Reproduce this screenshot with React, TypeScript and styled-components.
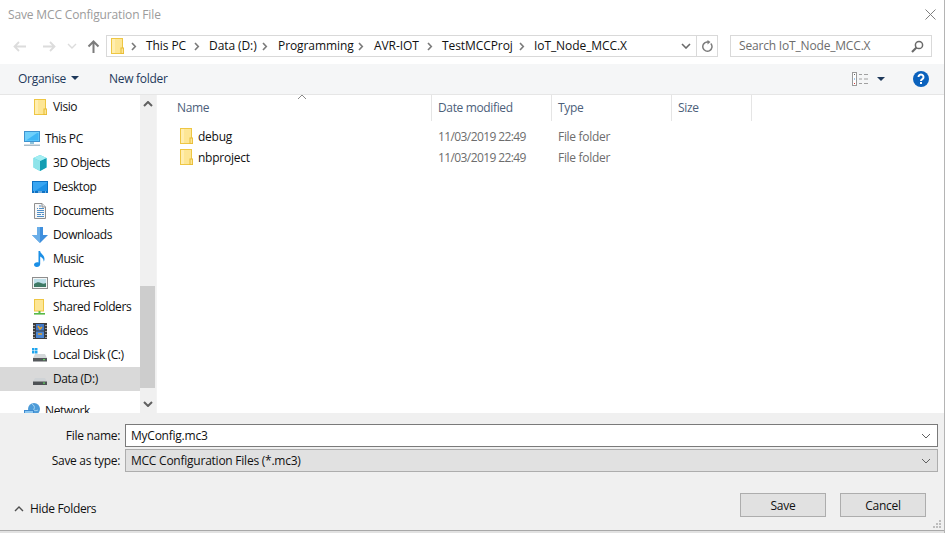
import React from "react";
import styled, { createGlobalStyle } from "styled-components";

const Global = createGlobalStyle`
  html, body { margin: 0; padding: 0; background: #fff; }
  * { box-sizing: border-box; }
`;

const Win = styled.div`
  width: 945px; height: 533px; overflow: hidden; background: #e2e2e2;
  display: flex; flex-direction: column; padding-bottom: 2px;
  font-family: "Open Sans", "Liberation Sans", sans-serif; font-size: 12px; letter-spacing: -0.24px; color: #111;
  border-right: 1px solid #b4b4b4;
`;
const TitleBar = styled.div`
  height: 28px; flex: none; display: flex; align-items: center; justify-content: space-between;
  padding: 0 8px 0 8px; color: #9b9b9b; background: #fff; letter-spacing: -0.15px;
`;
const AddrRow = styled.div`
  height: 36px; flex: none; display: flex; align-items: flex-start; padding: 7px 12px 0 12px; background: #fff;
`;
const Nav = styled.div`
  width: 94px; height: 22px; flex: none; display: flex; align-items: center;
`;
const NavSlot = styled.div<{ $w: number; $ml: number }>`
  width: ${p => p.$w}px; margin-left: ${p => p.$ml}px; flex: none; display: flex; justify-content: center; align-items: center;
`;
const AddrBox = styled.div`
  width: 612px; height: 22px; flex: none; display: flex; align-items: center;
  border: 1px solid #d9d9d9; padding-left: 4px;
`;
const Crumbs = styled.div`
  flex: 1; display: flex; align-items: center; min-width: 0; letter-spacing: -0.08px;
`;
const Crumb = styled.span<{ $w: number }>`
  width: ${p => p.$w}px; flex: none; white-space: nowrap; color: #111; margin-top: -2px;
`;
const Chev = styled.span<{ $w: number; $pl?: number }>`
  width: ${p => p.$w}px; flex: none; display: flex; align-items: center; padding-left: ${p => p.$pl ?? 4}px;
`;
const AddrEnd = styled.div<{ $sep?: boolean }>`
  width: 21px; height: 20px; flex: none; display: flex; align-items: center; justify-content: center;
  ${p => p.$sep ? "border-left: 1px solid #d9d9d9;" : ""}
`;
const SearchBox = styled.div`
  width: 202px; height: 22px; margin-left: 12px; flex: none; display: flex; align-items: center; justify-content: space-between;
  border: 1px solid #d9d9d9; padding: 0 7px 0 8px; color: #6d6d6d; letter-spacing: -0.18px;
`;
const SearchText = styled.span`margin-top: -2px;`;
const Toolbar = styled.div`
  height: 31px; flex: none; display: flex; align-items: center; background: #f5f6f7;
  border-bottom: 1px solid #e6e6e6; padding: 0 15px 0 18px; color: #1e395b;
`;
const ToolBtn = styled.span<{ $w: number }>`
  width: ${p => p.$w}px; flex: none; display: flex; align-items: center; gap: 5px; white-space: nowrap; margin-top: -2px;
  letter-spacing: -0.28px;
`;
const ToolSpacer = styled.div`flex: 1;`;
const ViewBtn = styled.div`
  display: flex; align-items: center; gap: 9px; margin-right: 28px;
`;
const Main = styled.div`
  flex: 1; display: flex; min-height: 0; background: #fff;
`;
const Tree = styled.div`
  width: 140px; flex: none; overflow: hidden; letter-spacing: -0.4px;
`;
const TreeRow = styled.div<{ $top?: boolean; $sel?: boolean; $gap?: boolean }>`
  height: 24px; display: flex; align-items: center; gap: 5px; white-space: nowrap;
  padding-left: ${p => p.$top ? 24 : 32}px;
  margin-top: ${p => p.$gap ? 8 : 0}px;
  background: ${p => p.$sel ? "#d9d9d9" : "transparent"};
  color: #111;
`;
const TreeIcon = styled.span`
  width: 16px; height: 16px; flex: none; display: flex; align-items: center; justify-content: center;
`;
const TreeText = styled.span`margin-top: -2px;`;
const Scrollbar = styled.div`
  width: 16px; flex: none; background: #f0f0f0; display: flex; flex-direction: column;
`;
const ScrollBtn = styled.div`
  height: 18px; flex: none; display: flex; align-items: center; justify-content: center;
`;
const ScrollTrack = styled.div`flex: 1; display: flex; flex-direction: column; padding-top: 173px;`;
const ScrollThumb = styled.div`height: 102px; width: 15px; background: #cdcdcd;`;
const ListPane = styled.div`
  flex: 1; min-width: 0; border-left: 1px solid #f3f3f3;
`;
const Header = styled.div`
  display: grid; grid-template-columns: 275px 120px 120px 80px; height: 26px; color: #4c607a; position: relative;
  letter-spacing: -0.36px;
`;
const HeadCell = styled.div<{ $first?: boolean }>`
  padding-left: ${p => p.$first ? 20 : 6}px; padding-bottom: 2px; display: flex; align-items: center;
  border-right: 1px solid #e5e5e5;
`;
const SortMark = styled.span`
  position: absolute; left: 140px; top: -1px; line-height: 0;
`;
const Rows = styled.div`padding-top: 5px;`;
const FileRow = styled.div`
  display: grid; grid-template-columns: 275px 120px 120px; height: 20px; margin-bottom: 1px; align-items: center;
`;
const NameCell = styled.div`
  display: flex; align-items: center; gap: 5px; padding-left: 23px; color: #111;
`;
const InfoCell = styled.div<{ $tight?: boolean }>`
  padding-left: 6px; color: #6d6d6d; letter-spacing: ${p => p.$tight ? -0.6 : -0.3}px;
`;
const Bottom = styled.div`
  height: 118px; flex: none; background: #f0f0f0; display: flex; flex-direction: column;
  border-bottom: 1px solid #a8a8a8; padding: 11px 6px 0 0; position: relative;
`;
const FieldRow = styled.div`
  display: flex; align-items: center; height: 23px; margin-bottom: 2px;
`;
const FieldLabel = styled.div`
  width: 120px; flex: none; text-align: right; color: #111; letter-spacing: -0.3px;
`;
const Combo = styled.div<{ $disabled?: boolean }>`
  margin-left: 5px; flex: 1; height: 23px; display: flex; align-items: center; justify-content: space-between;
  padding: 0 6px 0 5px; white-space: nowrap;
  background: ${p => p.$disabled ? "#e1e1e1" : "#fff"};
  border: 1px solid ${p => p.$disabled ? "#adadad" : "#7a7a7a"};
  color: #111;
`;
const ComboText = styled.span`margin-top: -1px;`;
const ActionRow = styled.div`
  display: flex; align-items: flex-start; justify-content: space-between; margin-top: 19px; padding: 0 12px 0 14px;
`;
const HideBtn = styled.div`
  display: flex; align-items: center; gap: 6px; color: #111; letter-spacing: -0.33px; margin-top: 7px;
`;
const Buttons = styled.div`display: flex; gap: 14px;`;
const Btn = styled.div`
  width: 86px; height: 24px; display: flex; align-items: center; justify-content: center;
  background: #e1e1e1; border: 1px solid #adadad; color: #111;
`;
const Grip = styled.span`
  position: absolute; right: 3px; bottom: 2px; line-height: 0;
`;

const Folder = () => (
  <svg width="13" height="16" viewBox="0 0 13 16">
    <rect x="0.5" y="0.5" width="11" height="15" fill="#fde695" stroke="#eec643" />
    <path d="M1 1h3v14H1z" fill="#ffeeb0" />
    <rect x="10" y="10" width="2.6" height="5.6" fill="#fde695" stroke="#e8bc35" strokeWidth="1" />
  </svg>
);
const SmallChev = ({ c = "#7a7a7a" }: { c?: string }) => (
  <svg width="6" height="9" viewBox="0 0 6 9"><path d="M1 1l3.3 3.5L1 8" fill="none" stroke={c} strokeWidth="1.6" /></svg>
);
const Down = ({ c = "#5a5a5a", w = 1 }: { c?: string; w?: number }) => (
  <svg width="10" height="6" viewBox="0 0 10 6"><path d="M1 1l4 4 4-4" fill="none" stroke={c} strokeWidth={w} /></svg>
);
const Up = ({ c = "#5a5a5a", w = 1.4 }: { c?: string; w?: number }) => (
  <svg width="10" height="6" viewBox="0 0 10 6"><path d="M1 5l4-4 4 4" fill="none" stroke={c} strokeWidth={w} /></svg>
);
const Tri = () => (
  <svg width="8" height="4" viewBox="0 0 8 4"><path d="M0 0h8L4 4z" fill="#1e395b" /></svg>
);

const Icons: Record<string, React.ReactNode> = {
  pc: (
    <svg width="16" height="16" viewBox="0 0 16 16">
      <rect x="0.5" y="0.5" width="15" height="10" fill="#6fd0fb" stroke="#3f93cf" />
      <path d="M2 9.500L13 2h1.500v7.500z" fill="#3fb6f5" />
      <rect x="6" y="11" width="4" height="2" fill="#8fc4dc" />
      <rect x="0" y="13.500" width="16" height="1.500" fill="#a9bcc8" />
    </svg>
  ),
  cube: (
    <svg width="16" height="16" viewBox="0 0 16 16">
      <path d="M8 0l6.500 3v9.500L8 16l-6.500-3.500V3z" fill="#4fd2df" />
      <path d="M8 6l6.500-3v9.500L8 16z" fill="#129db2" />
      <path d="M8 0l6.500 3L8 6 1.500 3z" fill="#a4eef2" />
      <path d="M1.500 3L8 6v10l-6.500-3.500z" fill="#8ee4ea" />
    </svg>
  ),
  desktop: (
    <svg width="16" height="12" viewBox="0 0 16 12">
      <rect width="16" height="12" fill="#0e72c4" />
      <rect x="1" y="1" width="14" height="9" fill="#39a6f2" />
      <path d="M3 10L15 2v8z" fill="#1f92e6" />
      <path d="M2 11h1M6 11h4M13 11h1" stroke="#cfe6f7" />
    </svg>
  ),
  docs: (
    <svg width="12" height="16" viewBox="0 0 12 16">
      <path d="M.5.500h7.500l3.500 3.500v11.500H.500z" fill="#f7f7f7" stroke="#8f8f8f" />
      <path d="M8 .500V4h3.500" fill="#dfe6ec" stroke="#8f8f8f" />
      <path d="M5 3h2M3 5.500h1M5 5.500h5M3 7.500h7M3 9.500h7M3 11.500h4M8 11.500h2M3 13.500h7" stroke="#4f8fc8" strokeWidth="1" />
    </svg>
  ),
  dl: (
    <svg width="16" height="16" viewBox="0 0 16 16">
      <path d="M5 0h6v8h5l-8 8-8-8h5z" fill="#3f8fdd" />
      <path d="M5 0h3v16L0 8h5z" fill="#6aaee8" />
    </svg>
  ),
  music: (
    <svg width="12" height="16" viewBox="0 0 12 16">
      <path d="M4.500 0h1.600c.4 3 4.400 4 4.400 8 0 1-.3 2-.8 2.700.2-3-2-4.500-3.500-5.200V13c0 1.700-1.500 3-3.400 3C1 16 0 15 0 13.800c0-1.500 1.500-2.600 3.200-2.600.500 0 .9.100 1.300.2z" fill="#1b8fe6" />
    </svg>
  ),
  pics: (
    <svg width="16" height="12" viewBox="0 0 16 12">
      <rect x="0.5" y="0.5" width="15" height="11" fill="#f4f6f6" stroke="#8e8e8e" />
      <rect x="2" y="2" width="12" height="8" fill="#bfe0ea" />
      <path d="M2 7c3-2 5-2 7-1s3 1 5 0v4H2z" fill="#3f7a66" />
    </svg>
  ),
  shared: (
    <svg width="12" height="16" viewBox="0 0 12 16">
      <rect x="0.5" y="0.5" width="9" height="11.500" fill="#fde695" stroke="#eec643" />
      <path d="M4.500 12h2v2h-2z" fill="#58b947" />
      <rect x="0" y="14" width="11" height="1.600" fill="#58b947" />
    </svg>
  ),
  video: (
    <svg width="14" height="16" viewBox="0 0 14 16">
      <rect width="14" height="16" fill="#3d3d3d" />
      <rect x="3" y="1" width="8" height="6.500" fill="#3f78c8" />
      <rect x="3" y="8.500" width="8" height="6.500" fill="#4a86d4" />
      <path d="M5 3l2 3 2-2M5 11h4" stroke="#e0a030" strokeWidth="1.500" fill="none" />
      <path d="M1 2v1M1 5v1M1 8v1M1 11v1M1 14v1M13 2v1M13 5v1M13 8v1M13 11v1M13 14v1" stroke="#fff" strokeWidth="1" />
    </svg>
  ),
  cdisk: (
    <svg width="16" height="16" viewBox="0 0 16 16">
      <path d="M0 1h2.500v2.500H0zM3 1h2.500v2.500H3zM0 4h2.500v2.500H0zM3 4h2.500v2.500H3z" fill="#1fa5ee" />
      <path d="M3 7h10l2 4H1z" fill="#d4d8da" />
      <rect x="1" y="11" width="14" height="3.500" fill="#55595c" />
      <rect x="11" y="12" width="2" height="1.200" fill="#5fd35f" />
    </svg>
  ),
  ddisk: (
    <svg width="16" height="16" viewBox="0 0 16 16">
      <path d="M3 7h10l2 3.500H1z" fill="#cfd3d6" />
      <rect x="1" y="10.500" width="14" height="3.500" fill="#4e5255" />
      <rect x="11" y="11.500" width="2" height="1.200" fill="#5fd35f" />
    </svg>
  ),
  net: (
    <svg width="16" height="16" viewBox="0 0 16 16">
      <circle cx="10" cy="6" r="6" fill="#4d9bd8" />
      <path d="M8 1c2 1 3 3 2 5s2 2 4 1" stroke="#a6d6f2" fill="none" />
      <rect x="0" y="7" width="10" height="7" fill="#3e8ad0" />
      <rect x="1" y="8" width="8" height="5" fill="#8cc8f2" />
    </svg>
  ),
};

const crumbs: [string, number, number][] = [
  ["This PC", 44, 19],
  ["Data (D:)", 49, 20],
  ["Programming", 76, 20],
  ["AVR-IOT", 49, 19],
  ["TestMCCProj", 73, 19],
];

const tree: [string, string][] = [
  ["cube", "3D Objects"], ["desktop", "Desktop"], ["docs", "Documents"], ["dl", "Downloads"],
  ["music", "Music"], ["pics", "Pictures"], ["shared", "Shared Folders"], ["video", "Videos"], ["cdisk", "Local Disk (C:)"],
];

export default function App() {
  return (
    <Win>
      <Global />
      <TitleBar>
        <span>Save MCC Configuration File</span>
        <svg width="11" height="11" viewBox="0 0 11 11"><path d="M.5.500l10 10M10.500.500l-10 10" stroke="#7f7f7f" fill="none" /></svg>
      </TitleBar>
      <AddrRow>
        <Nav>
          <NavSlot $w={14} $ml={0}>
            <svg width="13" height="11" viewBox="0 0 13 11"><path d="M6 1L1.500 5.500 6 10M2 5.500h11" fill="none" stroke="#dcdcdc" strokeWidth="1.800" /></svg>
          </NavSlot>
          <NavSlot $w={14} $ml={16}>
            <svg width="13" height="11" viewBox="0 0 13 11"><path d="M7 1l4.500 4.500L7 10M11 5.500H0" fill="none" stroke="#dcdcdc" strokeWidth="1.800" /></svg>
          </NavSlot>
          <NavSlot $w={10} $ml={11}>
            <Down c="#dcdcdc" w={1.4} />
          </NavSlot>
          <NavSlot $w={14} $ml={9}>
            <svg width="13" height="13" viewBox="0 0 13 13"><path d="M1.500 6.500l5-5 5 5M6.500 2v11" fill="none" stroke="#7c7c7c" strokeWidth="2" /></svg>
          </NavSlot>
        </Nav>
        <AddrBox>
          <Crumbs>
            <Folder />
            <Chev $w={22} $pl={7}><SmallChev /></Chev>
            {crumbs.map(([t, w, c]) => (
              <React.Fragment key={t}>
                <Crumb $w={w}>{t}</Crumb>
                <Chev $w={c}><SmallChev /></Chev>
              </React.Fragment>
            ))}
            <Crumb $w={94}>IoT_Node_MCC.X</Crumb>
          </Crumbs>
          <AddrEnd><Down c="#6a6a6a" w={1.600} /></AddrEnd>
          <AddrEnd $sep>
            <svg width="12" height="13" viewBox="0 0 12 13"><path d="M9.800 3.500A4.600 4.600 0 1 1 6 2H8" fill="none" stroke="#7c7c7c" strokeWidth="1.500" /><path d="M6.500 0l3 2-3 2.500z" fill="#7c7c7c" /></svg>
          </AddrEnd>
        </AddrBox>
        <SearchBox>
          <SearchText>Search IoT_Node_MCC.X</SearchText>
          <svg width="13" height="13" viewBox="0 0 13 13"><circle cx="8" cy="5" r="3.600" fill="none" stroke="#6a6a6a" strokeWidth="1.500" /><path d="M5.500 7.500L1 12" stroke="#6a6a6a" strokeWidth="2.200" /></svg>
        </SearchBox>
      </AddrRow>
      <Toolbar>
        <ToolBtn $w={91}>Organise <Tri /></ToolBtn>
        <ToolBtn $w={70}>New folder</ToolBtn>
        <ToolSpacer />
        <ViewBtn>
          <svg width="16" height="14" viewBox="0 0 16 14">
            <rect x="0.500" y="0.500" width="4" height="13" fill="#fff" stroke="#9a9a9a" />
            <path d="M2 2.500h1" stroke="#666" /><path d="M2 7h1" stroke="#3b8fd8" /><path d="M2 11.500h1" stroke="#d83b3b" />
            <path d="M7 2.500h3M12 2.500h4M7 7h3M12 7h4M7 11.500h3M12 11.500h4" stroke="#a0a0a0" />
          </svg>
          <Tri />
        </ViewBtn>
        <svg width="16" height="16" viewBox="0 0 16 16">
          <circle cx="8" cy="8" r="8" fill="#0b62bd" />
          <path d="M5.500 6a2.500 2.500 0 1 1 3.800 2.100C8.500 8.600 8 9 8 10" fill="none" stroke="#fff" strokeWidth="2" />
          <rect x="7" y="11" width="2" height="2" fill="#fff" />
        </svg>
      </Toolbar>
      <Main>
        <Tree>
          <TreeRow>
            <TreeIcon><Folder /></TreeIcon><TreeText>Visio</TreeText>
          </TreeRow>
          <TreeRow $top $gap>
            <TreeIcon>{Icons.pc}</TreeIcon><TreeText>This PC</TreeText>
          </TreeRow>
          {tree.map(([i, t]) => (
            <TreeRow key={t}>
              <TreeIcon>{Icons[i]}</TreeIcon><TreeText>{t}</TreeText>
            </TreeRow>
          ))}
          <TreeRow $sel>
            <TreeIcon>{Icons.ddisk}</TreeIcon><TreeText>Data (D:)</TreeText>
          </TreeRow>
          <TreeRow $top $gap>
            <TreeIcon>{Icons.net}</TreeIcon><TreeText>Network</TreeText>
          </TreeRow>
        </Tree>
        <Scrollbar>
          <ScrollBtn><Up c="#606060" w={2} /></ScrollBtn>
          <ScrollTrack><ScrollThumb /></ScrollTrack>
          <ScrollBtn><Down c="#606060" w={2} /></ScrollBtn>
        </Scrollbar>
        <ListPane>
          <Header>
            <HeadCell $first>Name</HeadCell>
            <HeadCell>Date modified</HeadCell>
            <HeadCell>Type</HeadCell>
            <HeadCell>Size</HeadCell>
            <SortMark><Up c="#8a8a8a" w={1} /></SortMark>
          </Header>
          <Rows>
            {["debug", "nbproject"].map(n => (
              <FileRow key={n}>
                <NameCell><Folder />{n}</NameCell>
                <InfoCell $tight>11/03/2019 22:49</InfoCell>
                <InfoCell>File folder</InfoCell>
              </FileRow>
            ))}
          </Rows>
        </ListPane>
      </Main>
      <Bottom>
        <FieldRow>
          <FieldLabel>File name:</FieldLabel>
          <Combo><ComboText>MyConfig.mc3</ComboText><Down c="#606060" /></Combo>
        </FieldRow>
        <FieldRow>
          <FieldLabel>Save as type:</FieldLabel>
          <Combo $disabled><ComboText>MCC Configuration Files (*.mc3)</ComboText><Down c="#606060" /></Combo>
        </FieldRow>
        <ActionRow>
          <HideBtn><Up c="#505050" />Hide Folders</HideBtn>
          <Buttons><Btn>Save</Btn><Btn>Cancel</Btn></Buttons>
        </ActionRow>
        <Grip>
          <svg width="8" height="8" viewBox="0 0 8 8"><path d="M6 0h2v2H6zM3 3h2v2H3zM6 3h2v2H6zM0 6h2v2H0zM3 6h2v2H3zM6 6h2v2H6z" fill="#bdbdbd" /></svg>
        </Grip>
      </Bottom>
    </Win>
  );
}
